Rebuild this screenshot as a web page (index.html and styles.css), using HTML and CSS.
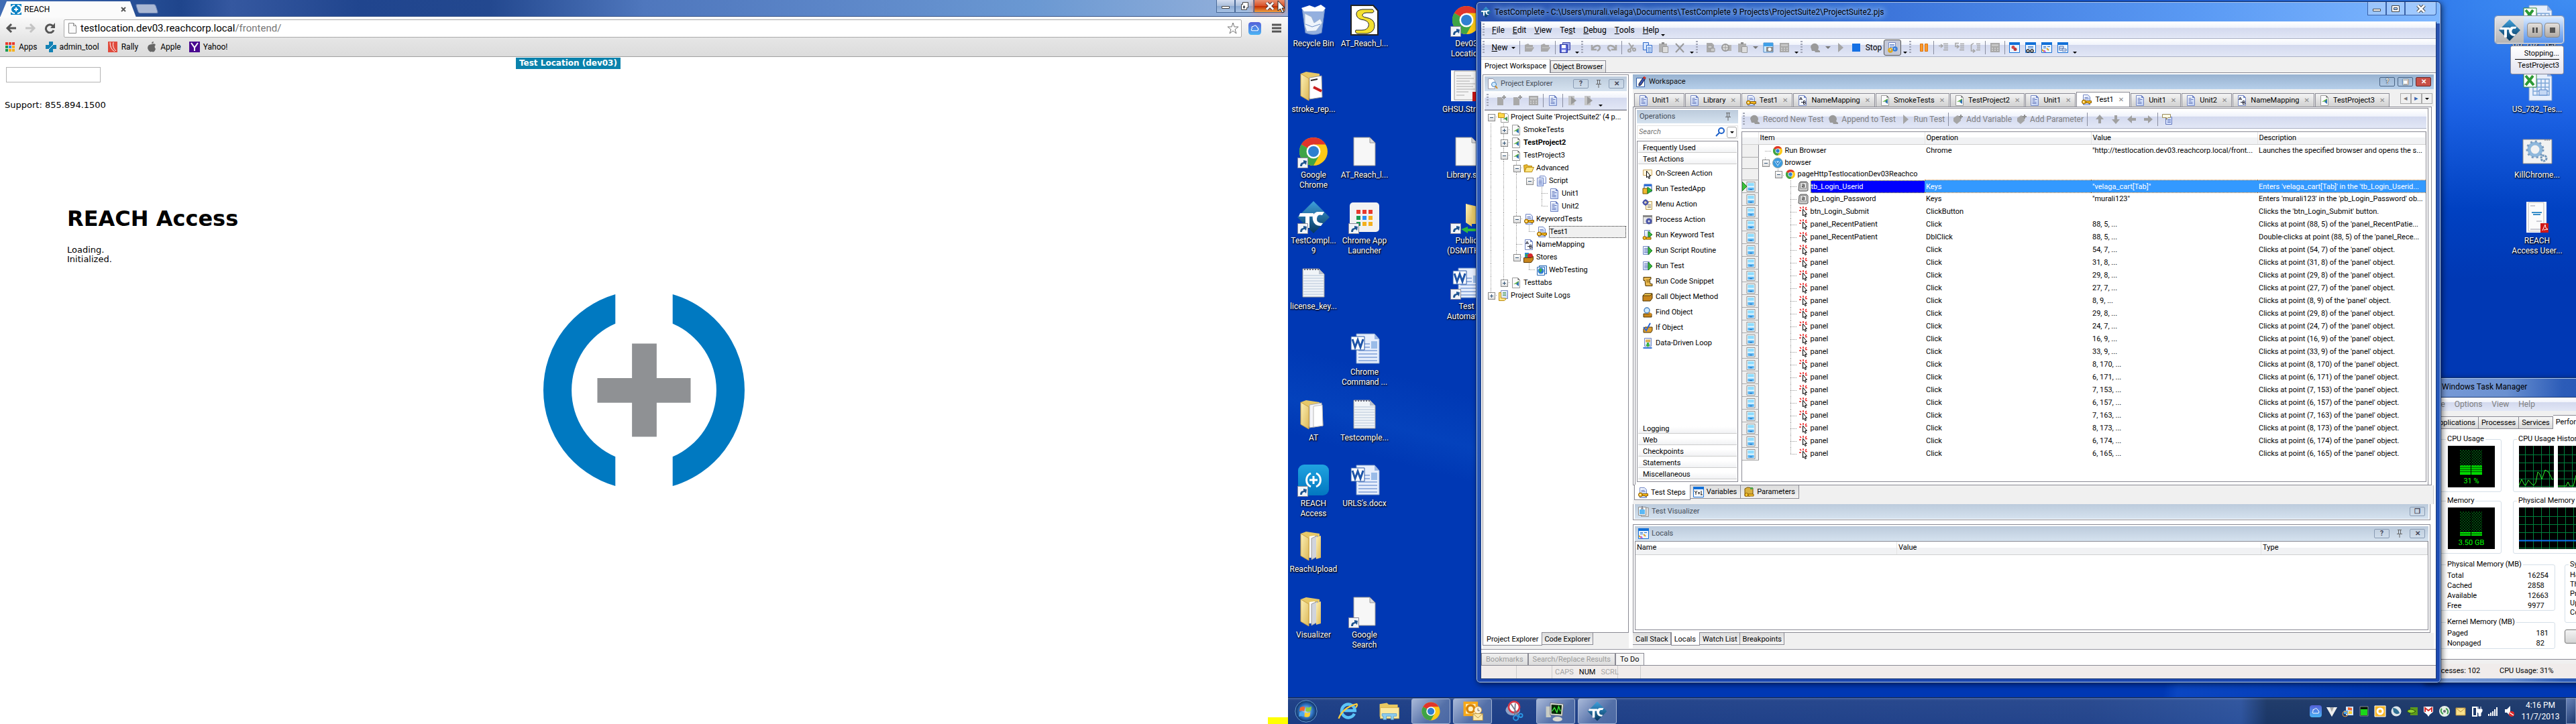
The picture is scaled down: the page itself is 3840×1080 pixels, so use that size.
FILE: index.html
```html
<!DOCTYPE html>
<html lang="en">
<head>
<meta charset="utf-8">
<title>REACH</title>
<link rel="stylesheet" href="styles.css">
</head>
<body>
<svg class="defs" aria-hidden="true">
  <defs>
    <linearGradient id="paper" x1="0" y1="0" x2="1" y2="1"><stop offset="0" stop-color="#fff"/><stop offset="1" stop-color="#b9cdf5"/></linearGradient>
    <linearGradient id="fold" x1="0" y1="0" x2="1" y2="1"><stop offset="0" stop-color="#fdf0b4"/><stop offset="1" stop-color="#dcb95a"/></linearGradient>
    <linearGradient id="tcg" x1="0" y1="0" x2="0" y2="1"><stop offset="0" stop-color="#3fa0dc"/><stop offset="1" stop-color="#06365c"/></linearGradient>
    <linearGradient id="rg" x1="0" y1="0" x2="0" y2="1"><stop offset="0" stop-color="#1fa3e0"/><stop offset="1" stop-color="#0277c0"/></linearGradient>
    <linearGradient id="cloudg" x1="0" y1="0" x2="0" y2="1"><stop offset="0" stop-color="#5560d8"/><stop offset="1" stop-color="#4ab4f4"/></linearGradient>
    <radialGradient id="orbg"><stop offset="0" stop-color="#bfe4ff"/><stop offset=".6" stop-color="#2f74c4"/><stop offset="1" stop-color="#0c2a5c"/></radialGradient>
    <pattern id="dots" width="4" height="4" patternUnits="userSpaceOnUse"><path d="M0 1h2M2 3h2" stroke="#009a1c"/></pattern>
  </defs>
  <symbol id="i-doc" viewBox="0 0 16 16"><path d="M2.500.5h8l3 3v12h-11z" fill="url(#paper)" stroke="#7487c4"/><path d="M10.500.5v3h3" fill="#5b73c0" stroke="#7487c4"/><path d="M4.500 4.500h4M4.500 6.500h7M4.500 8.500h4M4.500 10.500h6M4.500 12.500h6" stroke="#6478bd"/></symbol>
  <symbol id="i-key" viewBox="0 0 16 16"><path d="M3.500.5h7l3 3v12h-10z" fill="url(#paper)" stroke="#7487c4"/><path d="M5.500 4.500h5M5.500 6.500h6" stroke="#6478bd"/><circle cx="4.500" cy="11" r="3" fill="#f4b81c" stroke="#8a5a00"/><circle cx="4" cy="11" r="1" fill="#fff"/><path d="M7.500 9.500h8v3h-2v1h-2v-1h-4z" fill="#f4b81c" stroke="#8a5a00"/></symbol>
  <symbol id="i-map" viewBox="0 0 16 16"><path d="M2.500.5h8l3 3v12h-11z" fill="#f4f8ff" stroke="#7487c4"/><path d="M10.500.5v3h3" fill="#5b73c0" stroke="#7487c4"/><path d="M3.500 7l2-4 2 4M4 6h3M6 10.500h3M9.500 13.500v-5h1.500a1 1 0 0 1 0 2.500h-1.500 2a1 1 0 0 1 0 2.500z" fill="none" stroke="#223"/></symbol>
  <symbol id="i-proj" viewBox="0 0 16 16"><path d="M2.500.5h8l3 3v12h-11z" fill="#fafafa" stroke="#9a9a9a"/><path d="M10.500.5v3h3z" fill="#555"/><path d="M4 10l8-5v4z" fill="#5cb038"/><path d="M12 6v7l-4-3z" fill="#2b6fb0"/></symbol>
  <symbol id="i-suite" viewBox="0 0 16 16"><path d="M4.500 2.500h9l2 2v11h-11z" fill="#fafafa" stroke="#9a9a9a"/><path d="M7 11l7-4v7l-3-3z" fill="#4a9a50"/><path d="M.5 1.500h4l1 1h4v6h-9z" fill="#ffd84a" stroke="#b98a10"/></symbol>
  <symbol id="i-folder" viewBox="0 0 16 16"><path d="M.5 3.500l5-1 1 2h6v2h-8l-3 7z" fill="#e8b830" stroke="#b98a10"/><path d="M4.500 6.500h11l-3 7h-11z" fill="#ffe680" stroke="#b98a10"/></symbol>
  <symbol id="i-script" viewBox="0 0 16 16"><path d="M5.500.5h7l2 2v9h-9z" fill="#e8effd" stroke="#7487c4"/><path d="M1.500 3.500h9v12h-9z" fill="url(#paper)" stroke="#7487c4"/><path d="M3.500 6.500h5M3.500 8.500h5M3.500 10.500h5M3.500 12.500h5" stroke="#6478bd"/></symbol>
  <symbol id="i-store" viewBox="0 0 16 16"><path d="M2 1h6v7H2z" fill="#2e8fd8"/><circle cx="10" cy="6" r="4" fill="#d8282c"/><path d="M3 3h3v4H3z" fill="#3fa448"/><path d="M.5 8.500h11l3-2v5l-3 4h-11z" fill="#c8861c" stroke="#5c3800"/></symbol>
  <symbol id="i-web" viewBox="0 0 16 16"><path d="M4.500 1.500h11v12h-11z" fill="#d4e8ff" stroke="#2464b0"/><path d="M1.500 3.500h11v12h-11z" fill="#fff" stroke="#2464b0"/><circle cx="7" cy="9" r="4.500" fill="#2a7ad4"/><path d="M4 7l3-2 2 3-3 4z" fill="#3fb048"/></symbol>
  <symbol id="i-logs" viewBox="0 0 16 16"><path d="M4.500.5h10v12h-10z" fill="url(#paper)" stroke="#7487c4"/><path d="M7 3.500h5M7 5.500h5M7 7.500h5" stroke="#4f9a58"/><path d="M1.500 3.500h3v8l8 1-3 3h-8z" fill="#ffe68a" stroke="#b98a10"/></symbol>
  <symbol id="i-chrome" viewBox="0 0 48 48"><circle cx="24" cy="24" r="21" fill="#fdc916"/><path d="M24 24L5.800 13.500A21 21 0 0 1 42.200 13.500H24z" fill="#e0352b"/><path d="M24 24L5.800 13.500A21 21 0 0 0 24 45l9-16z" fill="#3fa446"/><circle cx="24" cy="24" r="10.500" fill="#fff"/><circle cx="24" cy="24" r="8" fill="#2f7fd0"/></symbol>
  <symbol id="i-globe" viewBox="0 0 16 16"><circle cx="8" cy="8" r="7.500" fill="#3a9be0" stroke="#9aa"/><path d="M3 5h10L8 13z" fill="#bfe4ff" opacity=".8"/><path d="M5 5l3 5 3-5" fill="none" stroke="#1a68b0"/></symbol>
  <symbol id="i-keys" viewBox="0 0 16 16"><path d="M4 1h9l2 2v11l-2 1H3l-2-1 1-11z" fill="#c9c9c9" stroke="#555"/><rect x="4" y="2.500" width="8.500" height="8.500" fill="#eee" stroke="#888"/><path d="M6 5h3.500v4.500M9.500 7H6.500v2h3" fill="none" stroke="#333"/></symbol>
  <symbol id="i-click" viewBox="0 0 16 16"><path d="M3 1l2 2M8 0v3M13 1l-2 2M2 6h3M11 4.500h3" stroke="#e81818" stroke-width="1.500"/><path d="M7.500 4v10l2-2 1.500 3.500 1.500-.7-1.500-3.300h2.500z" fill="#fff" stroke="#000"/></symbol>
  <symbol id="i-shot" viewBox="0 0 14 16"><path d="M.5.5h13v15H.5z" fill="#fff" stroke="#8a8a8a"/><path d="M2 2h10v6H2z" fill="#8fdcff"/><path d="M2 9h10v5H2z" fill="#5cb8f4"/><path d="M2 7h10v2H2z" fill="#e6f8ff"/><path d="M5 12.500h4" stroke="#1a58a8"/></symbol>
  <symbol id="i-screen" viewBox="0 0 16 16"><path d="M1.500 2.500h13v8h-13z" fill="#fff5dc" stroke="#c9a55c"/><path d="M6.500 4v10l2-2 1.500 3.500 1.500-.7-1.500-3.300h2.500z" fill="#fff" stroke="#000"/></symbol>
  <symbol id="i-app" viewBox="0 0 16 16"><path d="M3 1h11v11H3z" fill="#fff" stroke="#1d4fa8"/><path d="M3 1h11v3H3z" fill="#2e6fd8"/><path d="M1 7h7v8H1z" fill="#f0b830" stroke="#7a5400"/><path d="M8 5l7 5-7 5z" fill="#37b53c" stroke="#1a7a20"/></symbol>
  <symbol id="i-menu" viewBox="0 0 16 16"><path d="M5.500 3.500h9v12h-9z" fill="#fff6d8" stroke="#b99a50"/><path d="M8 8.500h5M8 10.500h5M8 12.500h5" stroke="#888"/><circle cx="5" cy="5" r="3" fill="none" stroke="#4a55a8" stroke-width="2.500"/><path d="M5 0v10M0 5h10" stroke="#4a55a8" stroke-dasharray="2 6"/></symbol>
  <symbol id="i-proc" viewBox="0 0 16 16"><path d="M1.500 1.500h13v12h-13z" fill="#e6e6e6" stroke="#999"/><path d="M1 1h14v3H1z" fill="#888"/><circle cx="10" cy="10" r="3" fill="none" stroke="#4a55a8" stroke-width="3"/></symbol>
  <symbol id="i-runkey" viewBox="0 0 16 16"><path d="M3.500.5h8v11h-8z" fill="url(#paper)" stroke="#7487c4"/><path d="M9 2l6 5-6 5z" fill="#37b53c" stroke="#1a7a20"/><circle cx="3.500" cy="12" r="2.500" fill="#f4b81c" stroke="#8a5a00"/><path d="M6 11h7v3H6z" fill="#f4b81c" stroke="#8a5a00"/></symbol>
  <symbol id="i-run" viewBox="0 0 16 16"><path d="M1.500 1.500h9v12h-9z" fill="url(#paper)" stroke="#7487c4"/><path d="M3 4.500h6M3 6.500h6M3 8.500h6M3 10.500h6" stroke="#6478bd"/><path d="M9 2l6 6-6 6z" fill="#37b53c" stroke="#1a7a20"/></symbol>
  <symbol id="i-snip" viewBox="0 0 16 16"><path d="M2 1.500h11v3h-2l1 7h3v3H5l-1-8H2z" fill="#e8b850" stroke="#4d3300"/><path d="M6 6h4M6.500 8.500h4" stroke="#7a5400"/></symbol>
  <symbol id="i-box" viewBox="0 0 16 16"><path d="M1 6l3-3h11v7l-3 4H1z" fill="#c8861c" stroke="#4d3300"/><path d="M1 6l3-3h11l-3 3z" fill="#ffd75c" stroke="#4d3300"/></symbol>
  <symbol id="i-find" viewBox="0 0 16 16"><path d="M2 10h12v5H2z" fill="#c8861c" stroke="#4d3300"/><circle cx="7" cy="5" r="4" fill="#cfeaff" stroke="#4d86c4" stroke-width="1.500"/><path d="M10 8l4 4" stroke="#d08a20" stroke-width="2"/></symbol>
  <symbol id="i-if" viewBox="0 0 16 16"><path d="M2 9l2-2h11v5l-2 3H2z" fill="#e0a030" stroke="#4d3300"/><path d="M2 7l4 5 6-11" fill="none" stroke="#2a66d8" stroke-width="2"/></symbol>
  <symbol id="i-loop" viewBox="0 0 16 16"><path d="M3.500.5h10v12h-10z" fill="url(#paper)" stroke="#7487c4"/><path d="M5 3.500h7M5 5.500h7" stroke="#e0a020" stroke-width="1.500"/><path d="M7 7h3v3h2l-3.500 4L5 10h2z" fill="#37b53c"/><path d="M1.500 15h13" stroke="#2e6fd8" stroke-width="2"/></symbol>
  <symbol id="g-new" viewBox="0 0 16 16"><path d="M2 3h6l3 3v9H2z" fill="#a9a9a9"/><path d="M12 0v6M9 3h6" stroke="#999" stroke-width="2"/></symbol>
  <symbol id="g-runp" viewBox="0 0 16 16"><path d="M2 1h9v14H2z" fill="#c4c4c4"/><path d="M6 2l8 6-8 6z" fill="#999"/></symbol>
  <symbol id="g-open" viewBox="0 0 16 16"><path d="M1 4l5-2 2 2h5v3l2 1-4 6H1z" fill="#a9a9a9"/><path d="M3 8h10" stroke="#ccc"/></symbol>
  <symbol id="g-save" viewBox="0 0 16 16"><path d="M4.500.5h11v11h-11z" fill="#9aa4e8" stroke="#3c48b0"/><path d="M.5 3.500h11v12H.5z" fill="#5a68dc" stroke="#28349c"/><path d="M3 4h6v5H3z" fill="#fff"/><path d="M3 11h6v4H3z" fill="#d8dcff"/></symbol>
  <symbol id="g-undo" viewBox="0 0 16 16"><path d="M2 4v7h7M3 10c2-5 10-7 11-2 0 3-2 4-4 5" fill="none" stroke="#a5a5a5" stroke-width="2.500"/></symbol>
  <symbol id="g-redo" viewBox="0 0 16 16"><path d="M14 4v7H7M13 10C11 5 3 3 2 8c0 3 2 4 4 5" fill="none" stroke="#a5a5a5" stroke-width="2.500"/></symbol>
  <symbol id="g-cut" viewBox="0 0 16 16"><path d="M4 1l6 9M11 4l-5 6" stroke="#a5a5a5" stroke-width="2"/><circle cx="5" cy="12.500" r="2" fill="none" stroke="#a5a5a5" stroke-width="2"/><circle cx="12" cy="11" r="2" fill="none" stroke="#a5a5a5" stroke-width="2"/></symbol>
  <symbol id="g-copy" viewBox="0 0 16 16"><path d="M1.500.5h8v11h-8z" fill="#d6e6ff" stroke="#2a66c8"/><path d="M6.500 4.500h8v11h-8z" fill="#eaf2ff" stroke="#2a66c8"/><path d="M8 7.500h5M8 9.500h5M8 11.500h5M8 13.500h5" stroke="#4d86d8"/></symbol>
  <symbol id="g-paste" viewBox="0 0 16 16"><path d="M1 2h12v13H1z" fill="#b0b0b0"/><path d="M5 0h4v3H5z" fill="#8f8f8f"/><path d="M6.500 6.500h8v9h-8z" fill="#ddd" stroke="#999"/></symbol>
  <symbol id="g-x" viewBox="0 0 16 16"><path d="M2 2l12 13M14 2L2 15" stroke="#999" stroke-width="2"/></symbol>
  <symbol id="g-obj" viewBox="0 0 16 16"><path d="M2 1h8l3 3v11H2z" fill="#a9a9a9"/><path d="M4 5h6v4H4zM8 9h6v5H8z" fill="#ccc" stroke="#999"/></symbol>
  <symbol id="g-aim" viewBox="0 0 16 16"><path d="M8 4h7v9H8z" fill="#b4b4b4"/><circle cx="6" cy="8" r="5" fill="#ddd" stroke="#999" stroke-width="2"/><path d="M6 4v8M2 8h8" stroke="#999"/></symbol>
  <symbol id="g-cam" viewBox="0 0 16 16"><path d="M1 1h14v14H1z" fill="#d2ecff" stroke="#4a86c4"/><path d="M1 1h14v5H1z" fill="#3fa0e8"/><path d="M5 7h10v7H5z" fill="#888"/><circle cx="10" cy="10.500" r="2.500" fill="#fff"/></symbol>
  <symbol id="g-rec" viewBox="0 0 16 16"><path d="M1 7a6 6 0 1 1 11 4l3 2v2H8l-1-2H3z" fill="#9a9a9a"/></symbol>
  <symbol id="g-play" viewBox="0 0 16 16"><path d="M4 1l8 7-8 7z" fill="#a5a5a5"/></symbol>
  <symbol id="g-stop" viewBox="0 0 16 16"><path d="M2 2h12v12H2z" fill="#1470e4"/></symbol>
  <symbol id="g-set" viewBox="0 0 16 16"><path d="M2.500.5h10v12h-10z" fill="#fff" stroke="#7487c4"/><path d="M4 3.500h7M4 5.500h7M4 7.500h7" stroke="#4d76c8"/><circle cx="5" cy="12" r="2.500" fill="none" stroke="#dca820" stroke-width="2.500"/><circle cx="12" cy="10" r="2.500" fill="none" stroke="#3a7fd8" stroke-width="2.500"/></symbol>
  <symbol id="g-pause" viewBox="0 0 16 16"><path d="M2.500 2.500h4v11h-4zM9.500 2.500h4v11h-4z" fill="#ff9a2a" stroke="#d87410"/></symbol>
  <symbol id="g-step" viewBox="0 0 16 16"><path d="M1 5.500h5M4 3l3 2.500L4 8M8 2.500h7M9 5.500h6M9 8.500h6M8 11.500h7" fill="none" stroke="#a5a5a5" stroke-width="1.500"/></symbol>
  <symbol id="g-over" viewBox="0 0 16 16"><path d="M7 1.500H2v5h4M4 4l3 2.500L4 9M9 2.500h6M9 5.500h6M9 8.500h6M8 11.500h7" fill="none" stroke="#a5a5a5" stroke-width="1.500"/></symbol>
  <symbol id="g-out" viewBox="0 0 16 16"><path d="M5 1.500L1.500 4v9H6M4 10.500L7 13l-3 2.500M9 2.500h6M10 5.500h5M10 8.500h5M9 11.500h6" fill="none" stroke="#a5a5a5" stroke-width="1.500"/></symbol>
  <symbol id="g-calc" viewBox="0 0 16 16"><path d="M1 1h14v14H1z" fill="#a9a9a9"/><path d="M3 3h10v3H3z" fill="#c6c6c6"/><path d="M3 9h10M3 12h10" stroke="#ccc" stroke-dasharray="2 2" stroke-width="2"/></symbol>
  <symbol id="g-w1" viewBox="0 0 16 16"><path d="M.5.5h15v15H.5z" fill="#eaf4ff" stroke="#1a6fd4"/><path d="M0 0h16v4H0z" fill="#1270d8"/><circle cx="6" cy="7.500" r="2.500" fill="#d04848"/><circle cx="9" cy="10.500" r="2.500" fill="#c03838"/></symbol>
  <symbol id="g-w2" viewBox="0 0 16 16"><path d="M.5.5h15v15H.5z" fill="#eaf4ff" stroke="#1a6fd4"/><path d="M0 0h16v4H0z" fill="#1270d8"/><path d="M4 6.500h8M4 8.500h8" stroke="#2f74c8"/><circle cx="4" cy="13" r="2" fill="#fff" stroke="#222" stroke-width="1.500"/><circle cx="10" cy="13" r="2" fill="#fff" stroke="#222" stroke-width="1.500"/></symbol>
  <symbol id="g-w3" viewBox="0 0 16 16"><path d="M.5.5h15v15H.5z" fill="#eaf4ff" stroke="#1a6fd4"/><path d="M0 0h16v4H0z" fill="#1270d8"/><path d="M3 6.500h4M9 6.500h4M3 8.500h4" stroke="#2f74c8"/><path d="M1 11l3 3M8 9l3 3" stroke="#e0a020" stroke-width="2"/><path d="M4 12l2 3" stroke="#c84cc8" stroke-width="2"/></symbol>
  <symbol id="g-w4" viewBox="0 0 16 16"><path d="M.5.5h15v15H.5z" fill="#eaf4ff" stroke="#1a6fd4"/><path d="M0 0h16v4H0z" fill="#1270d8"/><path d="M3 6h6v3H3zM7 10h6v3H7zM3 9v3h3" fill="none" stroke="#4868a8"/></symbol>
  <symbol id="g-cube" viewBox="0 0 16 16"><path d="M1 6l6-4 5 3v5l-6 5-5-4z" fill="#a5a5a5"/><path d="M12 1v6M9 4h6" stroke="#8f8f8f" stroke-width="2"/></symbol>
  <symbol id="g-arr" viewBox="0 0 16 16"><path d="M8 1l6 7h-4v6H6V8H2z" fill="#a0a0a0"/></symbol>
  <symbol id="g-note" viewBox="0 0 16 16"><path d="M5.500 4.500h9v11h-9z" fill="#d6e2ff" stroke="#6478bd"/><path d="M8 8.500h5M8 10.500h5M8 12.500h5" stroke="#6478bd"/><path d="M.5.5h12v5h-4l-2 3v-3h-6z" fill="#fffbe6" stroke="#998a5a"/></symbol>
  <symbol id="i-pin" viewBox="0 0 12 14"><path d="M3 1.500h6M4.500 2v5M7.500 2v5M2 7.500h8M6 8v5" fill="none" stroke="#666"/></symbol>
  <symbol id="i-edit" viewBox="0 0 16 16"><path d="M1.500 2.500h12v13h-12z" fill="#fff" stroke="#2a5aa8"/><path d="M5 11l7-10 3 2-7 10-3 1z" fill="#3a55b0" stroke="#223"/><path d="M12 1l3 2" stroke="#d83020" stroke-width="3"/></symbol>
  <symbol id="i-pe" viewBox="0 0 16 16"><path d="M1.500.5h7l3 3v12h-10z" fill="#fff" stroke="#99a"/><circle cx="10" cy="9" r="3.500" fill="#cfeaff" stroke="#3f7fc0"/><path d="M12 11l3 4" stroke="#d08a20" stroke-width="2"/></symbol>
  <symbol id="i-viz" viewBox="0 0 16 16"><path d="M4.500 2.500h11v13h-11z" fill="#ddd" stroke="#999"/><path d="M.5 1.500h11v12H.5z" fill="#fff" stroke="#888"/><path d="M2 5h8v7H2z" fill="#5cb8f4"/><path d="M6 0v4M4 4h4" stroke="#556"/></symbol>
  <symbol id="i-var" viewBox="0 0 16 16"><path d="M.5.5h15v15H.5z" fill="#fff" stroke="#1a6fd4"/><path d="M0 0h16v4H0z" fill="#1270d8"/><path d="M2 6l2 3v3M6 6L4 9M7 8.500h3M7 10.500h3M12 6v6M11 12h3" stroke="#111" fill="none"/></symbol>
  <symbol id="i-par" viewBox="0 0 16 16"><path d="M2 3l4-2 8 1v8l-4 4H2z" fill="#d8b040" stroke="#7a5400"/><circle cx="4.500" cy="12" r="2.500" fill="#ffcb30" stroke="#8a5a00"/><path d="M7 11h8v3H7z" fill="#ffcb30" stroke="#8a5a00"/><path d="M10 1h4v3h-4z" fill="#4fa448"/></symbol>

  <symbol id="d-bin" viewBox="0 0 48 48"><path d="M7 6h34l-5 37q-12 5-24 0z" fill="#c6d8ee" opacity=".75" stroke="#8fa6c8"/><path d="M6 6l12-4 8 3 9-4 7 5-4 5H10z" fill="#fff"/><path d="M11 14l10 5 4 9 9-6 3 6-9 12-14 1-3-9z" fill="#eef4fb" stroke="#9db2d0"/><path d="M12 30l10 4 12-4" stroke="#6b8fc8" fill="none"/></symbol>
  <symbol id="d-s" viewBox="0 0 48 48"><path d="M4 2h33l7 8v36H4z" fill="#fff" stroke="#222" stroke-width="2"/><path d="M36 8H21q-10 1-9 8t12 8q8 3 6 9t-10 6H11q-2 4 3 5h14q11-2 11-12t-13-12q-6-1-5-4t6-3h9q4-2 0-5z" fill="#f4e030" stroke="#222"/></symbol>
  <symbol id="d-folder" viewBox="0 0 48 48"><path d="M5 6l8-3 20 3v36H16z" fill="#e6c868"/><path d="M18 10l18-3 2 34-20 3z" fill="#f4f4f8" stroke="#aaa"/><path d="M24 12l13-2 1 31-14 2z" fill="#fff" stroke="#bbb"/><path d="M5 6l12 7v33L5 39z" fill="url(#fold)" stroke="#c8a048"/></symbol>
  <symbol id="d-folder2" viewBox="0 0 48 48"><path d="M5 6l8-3 20 3v36H16z" fill="#e6c868"/><path d="M18 10l8-1 1 33h-9z" fill="#fff"/><path d="M21 13l9-4v31l-9 5z" fill="#d0d4dc" stroke="#999"/><path d="M28 12l7-3v33l-7 2z" fill="url(#fold)"/><path d="M5 6l12 7v33L5 39z" fill="url(#fold)" stroke="#c8a048"/></symbol>
  <symbol id="d-rep" viewBox="0 0 48 48"><path d="M5 6l8-3 20 3v36H16z" fill="#e6c868"/><path d="M18 12l18-3 1 32-19 3z" fill="#fff" stroke="#999"/><path d="M20 16l10-2" stroke="#222" stroke-width="2"/><path d="M24 26l12 6" stroke="#c81e1e" stroke-width="4"/><path d="M5 6l12 7v33L5 39z" fill="url(#fold)" stroke="#c8a048"/></symbol>
  <symbol id="d-file" viewBox="0 0 48 48"><path d="M8 3h24l8 8v34H8z" fill="#f7f7f7" stroke="#999"/><path d="M32 3v8h8z" fill="#d8d8dc" stroke="#999"/></symbol>
  <symbol id="d-txt" viewBox="0 0 48 48"><path d="M8 3h24l8 8v34H8z" fill="#f0f4f8" stroke="#999"/><path d="M32 3v8h8z" fill="#b8c0cc"/><path d="M9 13h30M9 17h30M9 21h30M9 25h30M9 29h30M9 33h30M9 37h30M9 41h30" stroke="#b4c4d8"/><path d="M10 4h22" stroke="#667" stroke-width="2" stroke-dasharray="2 2"/></symbol>
  <symbol id="d-word" viewBox="0 0 48 48"><path d="M12 2h27l7 8v36H12z" fill="#e6eefc" stroke="#7f9cc8"/><path d="M39 2v8h7z" fill="#9ab4e0"/><path d="M15 17h17M15 22h17M15 27h28M15 32h28M15 37h28M15 42h28" stroke="#7fa0d8" stroke-width="1.500"/><path d="M34 13h9v11h-9z" fill="#9abce8"/><path d="M4 6h20v20H4z" fill="#fff" stroke="#2a5aa8"/><path d="M6 10l4 12 4-11 4 11 4-12" fill="none" stroke="#1f55a8" stroke-width="3"/></symbol>
  <symbol id="d-xls" viewBox="0 0 48 48"><path d="M12 2h27l7 8v36H12z" fill="#e6eefc" stroke="#7f9cc8"/><path d="M39 2v8h7z" fill="#9ab4e0"/><path d="M18 14h24v24H18zM18 20h24M18 26h24M18 32h24M24 14v24M30 14v24M36 14v24" fill="none" stroke="#7fa8d8" stroke-width="1.500"/><path d="M27 30h12v8H27z" fill="#c4d8f4" stroke="#5a86c8"/><path d="M4 6h19v20H4z" fill="#fff" stroke="#2c8a34"/><path d="M7 9l12 14M18 9L7 23" stroke="#2c9a34" stroke-width="4"/></symbol>
  <symbol id="d-tc" viewBox="0 0 48 48"><path d="M24 0l24 24-24 24L0 24z" fill="url(#tcg)"/><path d="M4 18h20v5h-6v17h-6V23H2z" fill="#fff"/><path d="M40 16H29q-8 3-6 12t12 9l3-4q-10 0-9-7t8-5z" fill="#fff"/></symbol>
  <symbol id="d-launch" viewBox="0 0 48 48"><rect x="2" y="2" width="44" height="44" rx="5" fill="#f2f2f2"/><path d="M12 13h6v6h-6zM21 13h6v6h-6zM30 13h6v6h-6z" fill="#e8392c"/><path d="M12 22h6v6h-6zM12 31h6v6h-6z" fill="#189a50"/><path d="M21 22h6v6h-6z" fill="#2a8ff0"/><path d="M30 22h6v6h-6zM21 31h6v6h-6zM30 31h6v6h-6z" fill="#f4b01c"/></symbol>
  <symbol id="d-reach" viewBox="0 0 48 48"><rect x="1" y="1" width="46" height="46" rx="9" fill="url(#rg)"/><path d="M20 14a11 11 0 0 0 0 20M28 14a11 11 0 0 1 0 20" fill="none" stroke="#fff" stroke-width="3"/><path d="M24 18v12M18 24h12" stroke="#fff" stroke-width="3"/></symbol>
  <symbol id="d-pdfw" viewBox="0 0 48 48"><path d="M1 1h44v46H1z" fill="#fff"/><path d="M6 2h36v43H6z" fill="#f4f4f4" stroke="#999"/><path d="M9 9h22M9 13h26M9 17h20M9 21h28M9 25h25M9 29h28M9 33h18M9 38h12" stroke="#aaa"/><path d="M33 33h14v14H33z" fill="#c81414"/></symbol>
  <symbol id="d-pdf" viewBox="0 0 48 48"><path d="M8 1h30v46H8z" fill="#fff"/><path d="M11 2h23v43H11z" fill="#fbfbfb" stroke="#bbb"/><path d="M16 17h15M18 20h11" stroke="#3a8fc8" stroke-width="2"/><path d="M14 7h7M23 30h8M14 42h16" stroke="#99a"/><path d="M29 33h12v14H29z" fill="#d01818"/><path d="M32 44l4-9 1 5 3 2-6 1" fill="none" stroke="#fff"/></symbol>
  <symbol id="d-gears" viewBox="0 0 48 48"><path d="M3 6h43v36H3z" fill="#f2f2f2" stroke="#888"/><path d="M35 7h9" stroke="#667" stroke-dasharray="2 1"/><circle cx="21" cy="21" r="9" fill="none" stroke="#8fb8dc" stroke-width="5"/><circle cx="21" cy="21" r="12" fill="none" stroke="#7a9cc0" stroke-width="3" stroke-dasharray="3 4"/><circle cx="34" cy="34" r="4" fill="none" stroke="#6f94b8" stroke-width="3" stroke-dasharray="3 1"/></symbol>
  <symbol id="d-net" viewBox="0 0 48 48"><path d="M23 4l17 4v26H30z" fill="#e6c868"/><path d="M23 4l9 4v30l-9-6z" fill="url(#fold)"/><path d="M16 42l10-4v3h20v4H26v3z" fill="#2fb840"/></symbol>
  <symbol id="d-cut" viewBox="0 0 16 16"><path d="M.5.5h15v15H.5z" fill="#f2f4f8" stroke="#889"/><path d="M4 13q0-6 5-6V4l5 1-1 6-2-2q-4 0-4 4z" fill="#1f5590"/></symbol>

  <symbol id="t-orb" viewBox="0 0 40 40"><circle cx="20" cy="20" r="18" fill="url(#orbg)" stroke="#6fa8dc"/><path d="M10 14q4-3 8-1l-1 7q-4-2-8 0z" fill="#f0642c"/><path d="M20 13q4 2 9-1l-1 7q-4 3-9 1z" fill="#8fd040"/><path d="M9 22q4-2 8 0l-1 7q-4-2-8 0z" fill="#4aa8f0"/><path d="M18 22q5 2 9-1l-1 7q-4 3-9 1z" fill="#fcd030"/></symbol>
  <symbol id="t-ie" viewBox="0 0 40 40"><path d="M31 24a11 11 0 1 1 1-5H14" fill="none" stroke="#5cc4f8" stroke-width="5"/><path d="M5 32Q12 14 35 8q2 2-2 6" fill="none" stroke="#f8cc3c" stroke-width="2.500"/></symbol>
  <symbol id="t-exp" viewBox="0 0 40 40"><path d="M4 8l12-2 3 3h15v20H4z" fill="#e8c860"/><path d="M5 14h31v18H5z" fill="#fbe9a0" stroke="#d8b048"/><path d="M8 24h24v4h-5v6h-4v-6h-8v6h-5v-6H8z" fill="#8fcdf0" stroke="#5aa0cc"/></symbol>
  <symbol id="t-out" viewBox="0 0 40 40"><path d="M5 4h24v24H5z" fill="#f8a818"/><path d="M9 8h16v16H9z" fill="#fff0c0"/><circle cx="17" cy="16" r="6" fill="none" stroke="#d88408" stroke-width="4"/><circle cx="29" cy="18" r="6" fill="#fff2d8" stroke="#d8a040"/><path d="M29 15v4h3" stroke="#555" fill="none"/><path d="M21 24h16v11H21z" fill="#fce8a8" stroke="#b8903c"/><path d="M21 24l8 7 8-7" fill="none" stroke="#b8903c"/></symbol>
  <symbol id="t-snip" viewBox="0 0 40 40"><ellipse cx="18" cy="18" rx="12" ry="9" fill="#8fa4c8"/><circle cx="20" cy="13" r="9" fill="#fff" stroke="#d83848" stroke-width="3"/><path d="M15 8l13 20M22 7l-1 20" stroke="#778" stroke-width="2"/><circle cx="23" cy="31" r="4" fill="none" stroke="#2a9ae8" stroke-width="2"/><circle cx="31" cy="27" r="3" fill="none" stroke="#2a9ae8" stroke-width="2"/></symbol>
  <symbol id="t-tm" viewBox="0 0 40 40"><path d="M4 12h8v18H4z" fill="#c8ccc4"/><path d="M11 6l22 2-2 20-20-2z" fill="#e0e4d8" stroke="#667"/><path d="M13 9l17 1-1 15-16-1z" fill="#062806"/><path d="M14 20l4-6 4 8 3-10 3 8" fill="none" stroke="#3cf03c" stroke-width="1.500"/><ellipse cx="23" cy="33" rx="8" ry="4" fill="#d8d8d0"/></symbol>
  <symbol id="y-cloud" viewBox="0 0 18 18"><rect width="18" height="18" rx="4" fill="url(#cloudg)"/><path d="M5 12h8q2-2 0-4l-1-1q-2-4-5-1-3 0-2 3-2 2 0 3z" fill="none" stroke="#fff"/></symbol>
  <symbol id="y-v" viewBox="0 0 18 18"><path d="M1 3h16L9 17z" fill="#aaa"/><path d="M1 3h5l3 7 3-7h5L9 17z" fill="#eee"/></symbol>
  <symbol id="y-win" viewBox="0 0 18 18"><path d="M6 2h11v13H6z" fill="#cfe4fa"/><path d="M9 3l6 1v4l-6-1z" fill="#f0642c"/><path d="M3 8h6v5H3z" fill="#4aa8f0"/><path d="M10 9h5v4h-5z" fill="#fcd030"/><circle cx="5" cy="13" r="4" fill="none" stroke="#e8a040"/></symbol>
  <symbol id="y-cpu" viewBox="0 0 18 18"><path d="M3 2h12v14H3z" fill="#041804" stroke="#889"/><path d="M4 6h10v9H4z" fill="#1ad81a"/></symbol>
  <symbol id="y-o" viewBox="0 0 18 18"><path d="M1 1h16v16H1z" fill="#f8b828" stroke="#fff"/><circle cx="9" cy="9" r="4" fill="none" stroke="#fff" stroke-width="3"/></symbol>
  <symbol id="y-ball" viewBox="0 0 18 18"><circle cx="9" cy="9" r="7.500" fill="#dfe6ea"/><path d="M4 4q7 0 10 8-6 3-9-2z" fill="#2f6f94"/></symbol>
  <symbol id="y-nv" viewBox="0 0 18 18"><path d="M6 3h11v12H6z" fill="#5c9a1c"/><path d="M1 9q5-6 13 0-7 6-13 0z" fill="#8fd030" stroke="#2a5008"/></symbol>
  <symbol id="y-m" viewBox="0 0 18 18"><path d="M2 2h14v8l-5 4-2 3-2-3-5-4z" fill="#fff"/><path d="M4 10V4l5 4 5-4v6" fill="none" stroke="#d02c2c" stroke-width="2"/></symbol>
  <symbol id="y-sync" viewBox="0 0 18 18"><circle cx="9" cy="9" r="8" fill="#e6efe6"/><path d="M5 5a5 5 0 0 0 2 8M13 13a5 5 0 0 0-2-8" fill="none" stroke="#3a9a4a" stroke-width="2"/><circle cx="9" cy="9" r="2" fill="#667"/></symbol>
  <symbol id="y-mail" viewBox="0 0 18 18"><path d="M2 4h14v11H2z" fill="#fae08a" stroke="#b8903c"/><path d="M2 4l7 6 7-6" fill="none" stroke="#b8903c"/></symbol>
  <symbol id="y-plug" viewBox="0 0 18 18"><path d="M3 3h6v13H3z" fill="none" stroke="#fff" stroke-width="2"/><path d="M9 6h8v3l-2 3v4h-3v-4l-3-3zM11 2v4M15 2v4" fill="#fff" stroke="#fff"/></symbol>
  <symbol id="y-sig" viewBox="0 0 18 18"><path d="M3 16v-3M6 16v-5M9 16V9M12 16V6M15 16V3" stroke="#fff" stroke-width="2"/></symbol>
  <symbol id="y-vol" viewBox="0 0 18 18"><path d="M3 6h3l5-5v15l-5-5H3z" fill="#fff"/><circle cx="13" cy="13" r="4" fill="#e02828"/><path d="M10 11l6 4" stroke="#fff" stroke-width="1.500"/></symbol>
</svg>

<section class="browser" aria-label="REACH in Chrome">
  <div class="tabstrip">
    <div class="btab"><svg class="s16" viewBox="0 0 16 16"><path d="M0 0h16v16H0z" fill="#0b82c4"/><path d="M6 2a6 6 0 0 0 0 12M10 2a6 6 0 0 1 0 12M8 5v6M5 8h6" fill="none" stroke="#fff" stroke-width="2"/></svg><span>REACH</span><button class="plain" aria-label="Close tab"><svg width="8" height="8" viewBox="0 0 8 8"><path d="M1 1l6 6M7 1L1 7" stroke="#555" stroke-width="2"/></svg></button></div>
    <button class="newtab" aria-label="New tab"></button>
    <div class="wbtns"><button class="wb wb-s" aria-label="Minimize"><svg width="14" height="12" viewBox="0 0 14 12"><path d="M1.500 6.500h11v3h-11z" fill="#fff" stroke="#444"/></svg></button><button class="wb wb-s" aria-label="Restore"><svg width="14" height="14" viewBox="0 0 14 14"><path d="M4.500 1.500h8v8h-2v3h-8v-8h2z" fill="#fff" stroke="#444"/><path d="M5.500 7h2v3h-2z" fill="#6a8cb8" stroke="#444"/></svg></button><button class="wb wb-close hot" aria-label="Close"><svg width="14" height="12" viewBox="0 0 14 12"><path d="M2 1l10 10M12 1L2 11" stroke="#533" stroke-width="5"/><path d="M2 1l10 10M12 1L2 11" stroke="#fff" stroke-width="3"/></svg></button></div>
    <svg class="cursor" width="12" height="20" viewBox="0 0 12 20"><path d="M1 1v15l3.500-3 3 6 2.500-1-3-6H11z" fill="#fff" stroke="#222"/></svg>
  </div>
  <div class="chromebar">
    <div class="navrow">
      <button class="plain" aria-label="Back"><svg width="17" height="16" viewBox="0 0 17 16"><path d="M9 2L3 8l6 6M3 8h13" fill="none" stroke="#555" stroke-width="3"/></svg></button>
      <button class="plain" aria-label="Forward"><svg width="17" height="16" viewBox="0 0 17 16"><path d="M8 2l6 6-6 6M14 8H1" fill="none" stroke="#c4c4c4" stroke-width="3"/></svg></button>
      <button class="plain" aria-label="Reload"><svg width="17" height="16" viewBox="0 0 17 16"><path d="M13 5a6 6 0 1 0 1 6" fill="none" stroke="#555" stroke-width="3"/><path d="M16 0v8H9z" fill="#555"/></svg></button>
      <div class="omni"><svg width="12" height="16" viewBox="0 0 12 16"><path d="M.5.5h7l4 4v11H.5z" fill="#fafafa" stroke="#888"/><path d="M7.500.5v4h4" fill="none" stroke="#888"/></svg><a href="#frontend">testlocation.dev03.reachcorp.local<i>/frontend/</i></a><svg class="star" width="18" height="18" viewBox="0 0 18 18"><path d="M9 1l2 6h6l-5 4 2 6-5-4-5 4 2-6-5-4h6z" fill="#fff" stroke="#777"/></svg></div>
      <svg class="ext" width="19" height="19"><use href="#y-cloud"/></svg>
      <button class="plain" aria-label="Menu"><svg width="14" height="14" viewBox="0 0 14 14"><path d="M0 2h14M0 7h14M0 12h14" stroke="#555" stroke-width="3"/></svg></button>
    </div>
    <nav class="marks">
      <a href="#apps"><svg class="s16" viewBox="0 0 16 16"><path d="M1 1h4v4H1zM6 1h4v4H6zM11 1h4v4h-4z" fill="#e8392c"/><path d="M1 6h4v4H1z" fill="#189a50"/><path d="M6 6h4v4H6z" fill="#2a8ff0"/><path d="M1 11h4v4H1z" fill="#189a50"/><path d="M11 6h4v4h-4zM6 11h4v4H6zM11 11h4v4h-4z" fill="#f4b01c"/></svg>Apps</a>
      <a href="#admin"><svg class="s16" viewBox="0 0 16 16"><path d="M5 0h6v5h5v6h-5v5H5v-5H0V5h5z" fill="#1482b4"/><path d="M3 13L13 3" stroke="#fff"/></svg>admin_tool</a>
      <a href="#rally"><svg class="s16" viewBox="0 0 16 16"><path d="M1 0h14v16H1z" fill="#e04a3c"/><path d="M4 1q0 10 7 14M9 1q-2 8 4 13" fill="none" stroke="#fff"/></svg>Rally</a>
      <a href="#apple"><svg class="s16" viewBox="0 0 16 16"><path d="M8 4q5-2 6 1-3 2 0 6-2 5-4 4.500-2-1-4 0Q3 14 2 10q0-6 6-6zM8 3q0-3 3-3 0 3-3 3z" fill="#666"/></svg>Apple</a>
      <a href="#yahoo"><svg class="s16" viewBox="0 0 16 16"><path d="M0 0h16v16H0z" fill="#4a0a90"/><path d="M3 2l5 7 5-7M8 9v5" fill="none" stroke="#fff" stroke-width="2"/></svg>Yahoo!</a>
    </nav>
  </div>
  <main class="page">
    <div class="pagetop"><input class="pin" type="text" aria-label="Location"><strong class="tag">Test Location (dev03)</strong></div>
    <p class="support">Support: 855.894.1500</p>
    <h1>REACH Access</h1>
    <p class="load">Loading.<br>Initialized.</p>
    <svg class="logo" width="300" height="300" viewBox="-151 -151 302 302"><path d="M-43-144A150 150 0 0 0-43 144V100A109 109 0 0 1-43-100zM43-144A150 150 0 0 1 43 144V100A109 109 0 0 0 43-100z" fill="#0079c1"/><path d="M-18-70h37v52h51v37H19v51h-37V19h-52v-37h52z" fill="#8f9194"/></svg>
  </main>
  <div class="yellow"></div>
</section>

<section class="desktop" aria-label="Desktop">
  <div class="icons">
    <a href="#d" class="c1 r1"><svg><use href="#d-bin"/></svg>Recycle Bin</a>
    <a href="#d" class="c1 r2"><svg><use href="#d-rep"/></svg>stroke_rep...</a>
    <a href="#d" class="c1 r3 sc"><svg><use href="#i-chrome"/></svg>Google Chrome<svg class="cut"><use href="#d-cut"/></svg></a>
    <a href="#d" class="c1 r4 sc"><svg><use href="#d-tc"/></svg>TestCompl... 9<svg class="cut"><use href="#d-cut"/></svg></a>
    <a href="#d" class="c1 r5"><svg><use href="#d-txt"/></svg>license_key...</a>
    <a href="#d" class="c1 r7"><svg><use href="#d-folder"/></svg>AT</a>
    <a href="#d" class="c1 r8 sc"><svg><use href="#d-reach"/></svg>REACH Access<svg class="cut"><use href="#d-cut"/></svg></a>
    <a href="#d" class="c1 r9"><svg><use href="#d-folder2"/></svg>ReachUpload</a>
    <a href="#d" class="c1 r10"><svg><use href="#d-folder2"/></svg>Visualizer</a>
    <a href="#d" class="c2 r1"><svg><use href="#d-s"/></svg>AT_Reach_l...</a>
    <a href="#d" class="c2 r3"><svg><use href="#d-file"/></svg>AT_Reach_l...</a>
    <a href="#d" class="c2 r4 sc"><svg><use href="#d-launch"/></svg>Chrome App Launcher<svg class="cut"><use href="#d-cut"/></svg></a>
    <a href="#d" class="c2 r6"><svg><use href="#d-word"/></svg>Chrome Command ...</a>
    <a href="#d" class="c2 r7"><svg><use href="#d-txt"/></svg>Testcomple...</a>
    <a href="#d" class="c2 r8"><svg><use href="#d-word"/></svg>URLS's.docx</a>
    <a href="#d" class="c2 r10 sc"><svg><use href="#d-file"/></svg>Google Search<svg class="cut"><use href="#d-cut"/></svg></a>
    <a href="#d" class="c4 r1 sc"><svg><use href="#i-chrome"/></svg>Dev03 Location<svg class="cut"><use href="#d-cut"/></svg></a>
    <a href="#d" class="c4 r2"><svg><use href="#d-pdfw"/></svg>GHSU.Strok...</a>
    <a href="#d" class="c4 r3"><svg><use href="#d-file"/></svg>Library.sv...</a>
    <a href="#d" class="c4 r4 sc"><svg><use href="#d-net"/></svg>Public (DSMITH...<svg class="cut"><use href="#d-cut"/></svg></a>
    <a href="#d" class="c4 r5 sc"><svg><use href="#d-word"/></svg>Test Automati...<svg class="cut"><use href="#d-cut"/></svg></a>
    <a href="#d" class="c25 r1"><svg><use href="#d-xls"/></svg>US_732_Tes...</a>
    <a href="#d" class="c25 r2"><svg><use href="#d-xls"/></svg>US_732_Tes...</a>
    <a href="#d" class="c25 r3"><svg><use href="#d-gears"/></svg>KillChrome...</a>
    <a href="#d" class="c25 r4"><svg><use href="#d-pdf"/></svg>REACH Access User...</a>
  </div>

  <article class="win tm" aria-label="Windows Task Manager">
    <header class="tm-title">Windows Task Manager</header>
    <div class="tm-body">
      <div class="tm-menu"><button>File</button><button>Options</button><button>View</button><button>Help</button></div>
      <div class="tm-tabs"><button>Applications</button><button>Processes</button><button>Services</button><button class="on">Performance</button></div>
      <div class="tm-page">
        <div class="tm-grid">
          <fieldset><legend>CPU Usage</legend><svg class="g1" width="70" height="62" viewBox="0 0 70 62"><path d="M0 0h70v62H0z"/><path d="M18 6h16v24H18zM35 6h16v24H35z" fill="url(#dots)"/><path d="M18 30.500h16m1 0h16M18 33.500h16m1 0h16M18 36.500h16m1 0h16M18 39.500h16m1 0h16M18 42h16m1 0h16" stroke="#0f0" stroke-width="2"/><text x="35" y="56">31 %</text></svg></fieldset>
          <fieldset class="wide"><legend>CPU Usage History</legend><div class="hist"><svg width="52" height="62" viewBox="0 0 52 62"><path d="M0 0h52v62H0z"/><path d="M9.500 0v62M21.500 0v62M33.500 0v62M45.500 0v62M0 13.500h52M0 25.500h52M0 37.500h52M0 49.500h52M0 60.500h52" stroke="#00803c"/><path d="M0 59l4-9 4 8 2 1 4-8 5 6 3 2 3-4 3-16 3 3 3 8 5-14 5 3 3 6 3 6" fill="none" stroke="#2cf02c"/></svg><svg width="52" height="62" viewBox="0 0 52 62"><path d="M0 0h52v62H0z"/><path d="M9.500 0v62M21.500 0v62M33.500 0v62M45.500 0v62M0 13.500h52M0 25.500h52M0 37.500h52M0 49.500h52M0 60.500h52" stroke="#00803c"/><path d="M0 60h12l3-6 3 6h5l4-16 4 14h21" fill="none" stroke="#2cf02c"/></svg></div></fieldset>
          <fieldset><legend>Memory</legend><svg class="g1" width="70" height="62" viewBox="0 0 70 62"><path d="M0 0h70v62H0z"/><path d="M18 6h16v31H18zM35 6h16v31H35z" fill="url(#dots)"/><path d="M18 38h16m1 0h16M18 41h16m1 0h16" stroke="#0f0" stroke-width="2"/><text x="35" y="56">3.50 GB</text></svg></fieldset>
          <fieldset class="wide"><legend>Physical Memory Usage</legend><div class="hist"><svg width="120" height="62" viewBox="0 0 120 62"><path d="M0 0h120v62H0z"/><path d="M9.500 0v62M21.500 0v62M33.500 0v62M45.500 0v62M57.500 0v62M69.500 0v62M81.500 0v62M93.500 0v62M105.500 0v62M0 13.500h120M0 25.500h120M0 37.500h120M0 60.500h120" stroke="#00803c"/><path d="M0 49.500h120" stroke="#0a78f8" stroke-width="2"/></svg></div></fieldset>
        </div>
        <div class="tm-low">
          <div class="tm-c">
            <fieldset><legend>Physical Memory (MB)</legend><dl><dt>Total</dt><dd>16254</dd><dt>Cached</dt><dd>2858</dd><dt>Available</dt><dd>12663</dd><dt>Free</dt><dd>9977</dd></dl></fieldset>
            <fieldset class="kern"><legend>Kernel Memory (MB)</legend><dl><dt>Paged</dt><dd>181</dd><dt>Nonpaged</dt><dd>82</dd></dl></fieldset>
          </div>
          <div class="tm-c">
            <fieldset class="sys"><legend>System</legend><dl><dt>Handles</dt><dt>Threads</dt><dt>Processes</dt><dt>Up Time</dt><dt>Commit</dt></dl></fieldset>
            <button class="resmon" aria-label="Resource Monitor"></button>
          </div>
        </div>
      </div>
      <footer class="tm-status"><span>Processes: 102</span><span>CPU Usage: 31%</span></footer>
    </div>
  </article>

  <article class="win tc" aria-label="TestComplete">
    <header class="tc-title"><svg class="s16" viewBox="0 0 48 48"><use href="#d-tc"/></svg><span>TestComplete - C:\Users\murali.velaga\Documents\TestComplete 9 Projects\ProjectSuite2\ProjectSuite2.pjs</span>
      <div class="wbtns"><button class="wb" aria-label="Minimize"><svg width="14" height="12" viewBox="0 0 14 12"><path d="M1.500 6.500h11v3h-11z" fill="#fff" stroke="#444"/></svg></button><button class="wb" aria-label="Maximize"><svg width="14" height="12" viewBox="0 0 14 12"><path d="M1.500 1.500h11v9h-11zM4.500 4.500h5v3h-5z" fill="#fff" fill-rule="evenodd" stroke="#444"/></svg></button><button class="wb wb-close" aria-label="Close"><svg width="14" height="12" viewBox="0 0 14 12"><path d="M2 1l10 10M12 1L2 11" stroke="#444" stroke-width="5"/><path d="M2 1l10 10M12 1L2 11" stroke="#fff" stroke-width="3"/></svg></button></div>
    </header>
    <div class="tc-body">
      <nav class="menu"><i class="grip"></i><button><u>F</u>ile</button><button><u>E</u>dit</button><button><u>V</u>iew</button><button>Te<u>s</u>t</button><button><u>D</u>ebug</button><button><u>T</u>ools</button><button><u>H</u>elp</button><i class="drop"></i></nav>
      <div class="bar tbar">
        <i class="grip"></i><button class="new"><u>N</u>ew<i class="arrow"></i></button><i class="sep"></i><button aria-label="Open"><svg><use href="#g-open"/></svg></button><button aria-label="Close project"><svg><use href="#g-open"/></svg></button><i class="sep"></i><button aria-label="Save all"><svg><use href="#g-save"/></svg></button><i class="drop"></i>
        <i class="grip"></i><button aria-label="Undo"><svg><use href="#g-undo"/></svg></button><button aria-label="Redo"><svg><use href="#g-redo"/></svg></button><i class="sep"></i><button aria-label="Cut"><svg><use href="#g-cut"/></svg></button><button aria-label="Copy"><svg><use href="#g-copy"/></svg></button><button aria-label="Paste"><svg><use href="#g-paste"/></svg></button><button aria-label="Delete"><svg><use href="#g-x"/></svg></button><i class="drop"></i>
        <i class="grip"></i><button aria-label="Checkpoint"><svg><use href="#g-obj"/></svg></button><button aria-label="Object"><svg><use href="#g-aim"/></svg></button><button aria-label="Add check"><svg><use href="#g-paste"/></svg></button><i class="arrow big"></i><button aria-label="Capture"><svg><use href="#g-cam"/></svg></button><button aria-label="Stores"><svg><use href="#g-calc"/></svg></button><i class="drop"></i>
        <i class="grip"></i><button aria-label="Record"><svg><use href="#g-rec"/></svg></button><i class="arrow big"></i><button aria-label="Run"><svg><use href="#g-play"/></svg></button><button class="stop"><svg><use href="#g-stop"/></svg>Stop</button><button class="pressed" aria-label="Options"><svg><use href="#g-set"/></svg></button><i class="drop"></i>
        <i class="grip"></i><button aria-label="Pause"><svg><use href="#g-pause"/></svg></button><i class="sep"></i><button aria-label="Step into"><svg><use href="#g-step"/></svg></button><button aria-label="Step over"><svg><use href="#g-over"/></svg></button><button aria-label="Step out"><svg><use href="#g-out"/></svg></button><i class="sep"></i><button aria-label="Evaluate"><svg><use href="#g-calc"/></svg></button><i class="sep"></i><button aria-label="Breakpoints"><svg><use href="#g-w1"/></svg></button><button aria-label="Watch"><svg><use href="#g-w2"/></svg></button><button aria-label="Locals"><svg><use href="#g-w3"/></svg></button><button aria-label="Call stack"><svg><use href="#g-w4"/></svg></button><i class="drop"></i>
      </div>
      <div class="toptabs"><button class="on">Project Workspace</button><button>Object Browser</button></div>
      <div class="split">
        <aside class="left">
          <div class="panel">
            <div class="head"><svg class="s16"><use href="#i-pe"/></svg><span>Project Explorer</span><button class="hb" aria-label="Help">?</button><svg class="pinico"><use href="#i-pin"/></svg><button class="hb" aria-label="Close">✕</button></div>
            <div class="bar ptb"><i class="grip"></i><button aria-label="Add"><svg><use href="#g-new"/></svg></button><button aria-label="New item"><svg><use href="#g-new"/></svg></button><button aria-label="Remove"><svg><use href="#g-calc"/></svg></button><i class="sep"></i><button aria-label="List"><svg><use href="#i-doc"/></svg></button><i class="sep"></i><button aria-label="Run"><svg><use href="#g-runp"/></svg></button><button aria-label="Run all"><svg><use href="#g-runp"/></svg></button><i class="drop"></i></div>
            <ul class="tree">
              <li><b class="m f"></b><svg><use href="#i-suite"/></svg>Project Suite 'ProjectSuite2' (4 p...</li>
              <li><i class="v"></i><b class="p v"></b><svg><use href="#i-proj"/></svg>SmokeTests</li>
              <li class="bold"><i class="v"></i><b class="p v"></b><svg><use href="#i-proj"/></svg>TestProject2</li>
              <li><i class="v"></i><b class="m v"></b><svg><use href="#i-proj"/></svg>TestProject3</li>
              <li><i class="v"></i><i class="v"></i><b class="m v"></b><svg><use href="#i-folder"/></svg>Advanced</li>
              <li><i class="v"></i><i class="v"></i><i class="v"></i><b class="m"></b><svg><use href="#i-script"/></svg>Script</li>
              <li><i class="v"></i><i class="v"></i><i class="v"></i><i></i><i class="v t"></i><svg><use href="#i-doc"/></svg>Unit1</li>
              <li><i class="v"></i><i class="v"></i><i class="v"></i><i></i><i class="l t"></i><svg><use href="#i-doc"/></svg>Unit2</li>
              <li><i class="v"></i><i class="v"></i><b class="m v"></b><svg><use href="#i-key"/></svg>KeywordTests</li>
              <li><i class="v"></i><i class="v"></i><i class="v"></i><i class="l t"></i><svg><use href="#i-key"/></svg><em>Test1</em></li>
              <li><i class="v"></i><i class="v"></i><i class="v t"></i><svg><use href="#i-map"/></svg>NameMapping</li>
              <li><i class="v"></i><i class="v"></i><b class="m l"></b><svg><use href="#i-store"/></svg>Stores</li>
              <li><i class="v"></i><i class="v"></i><i></i><i class="l t"></i><svg><use href="#i-web"/></svg>WebTesting</li>
              <li><i class="v"></i><b class="p l"></b><svg><use href="#i-proj"/></svg>Testtabs</li>
              <li><b class="p l"></b><svg><use href="#i-logs"/></svg>Project Suite Logs</li>
            </ul>
          </div>
          <div class="btabs"><button class="on">Project Explorer</button><button>Code Explorer</button></div>
        </aside>

        <div class="right">
          <div class="head active ws"><svg class="s16"><use href="#i-edit"/></svg><span>Workspace</span><button class="hb" aria-label="Help">?</button><button class="hb" aria-label="Maximize">▣</button><button class="hb red" aria-label="Close">✕</button></div>
          <div class="dtabs">
            <button><svg class="s16"><use href="#i-doc"/></svg><span>Unit1</span><i>✕</i></button>
            <button><svg class="s16"><use href="#i-doc"/></svg><span>Library</span><i>✕</i></button>
            <button><svg class="s16"><use href="#i-key"/></svg><span>Test1</span><i>✕</i></button>
            <button><svg class="s16"><use href="#i-map"/></svg><span>NameMapping</span><i>✕</i></button>
            <button><svg class="s16"><use href="#i-proj"/></svg><span>SmokeTests</span><i>✕</i></button>
            <button><svg class="s16"><use href="#i-proj"/></svg><span>TestProject2</span><i>✕</i></button>
            <button><svg class="s16"><use href="#i-doc"/></svg><span>Unit1</span><i>✕</i></button>
            <button class="on"><svg class="s16"><use href="#i-key"/></svg><span>Test1</span><i>✕</i></button>
            <button><svg class="s16"><use href="#i-doc"/></svg><span>Unit1</span><i>✕</i></button>
            <button><svg class="s16"><use href="#i-doc"/></svg><span>Unit2</span><i>✕</i></button>
            <button><svg class="s16"><use href="#i-map"/></svg><span>NameMapping</span><i>✕</i></button>
            <button><svg class="s16"><use href="#i-proj"/></svg><span>TestProject3</span><i>✕</i></button>
            <div class="scrollers"><button aria-label="Previous">◂</button><button class="blue" aria-label="Next">▸</button><button aria-label="List tabs"><i class="arrow"></i></button></div>
          </div>
          <div class="doc"><div class="docin">
            <aside class="ops">
              <div class="head"><span>Operations</span><svg class="pinico"><use href="#i-pin"/></svg></div>
              <div class="search"><input type="text" placeholder="Search" aria-label="Search operations"><svg width="14" height="14" viewBox="0 0 14 14"><circle cx="9" cy="5" r="4" fill="#fff" stroke="#1a5fc8" stroke-width="2"/><path d="M6 8l-5 5" stroke="#1a5fc8" stroke-width="2"/></svg><button aria-label="Search options"><i class="arrow"></i></button></div>
              <div class="acc">
                <button class="sect">Frequently Used</button><button class="sect">Test Actions</button>
                <ul>
                  <li><svg><use href="#i-screen"/></svg>On-Screen Action</li><li><svg><use href="#i-app"/></svg>Run TestedApp</li><li><svg><use href="#i-menu"/></svg>Menu Action</li><li><svg><use href="#i-proc"/></svg>Process Action</li><li><svg><use href="#i-runkey"/></svg>Run Keyword Test</li><li><svg><use href="#i-run"/></svg>Run Script Routine</li><li><svg><use href="#i-run"/></svg>Run Test</li><li><svg><use href="#i-snip"/></svg>Run Code Snippet</li><li><svg><use href="#i-box"/></svg>Call Object Method</li><li><svg><use href="#i-find"/></svg>Find Object</li><li><svg><use href="#i-if"/></svg>If Object</li><li><svg><use href="#i-loop"/></svg>Data-Driven Loop</li>
                </ul>
                <button class="sect">Logging</button><button class="sect">Web</button><button class="sect">Checkpoints</button><button class="sect">Statements</button><button class="sect">Miscellaneous</button>
              </div>
            </aside>
            <div class="steps">
              <div class="bar sbar"><i class="grip"></i><button><svg><use href="#g-rec"/></svg>Record New Test</button><button><svg><use href="#g-rec"/></svg>Append to Test</button><button><svg><use href="#g-play"/></svg>Run Test</button><i class="sep"></i><button><svg><use href="#g-cube"/></svg>Add Variable</button><button><svg><use href="#g-cube"/></svg>Add Parameter</button><i class="sep"></i><button class="ic" aria-label="Up"><svg><use href="#g-arr"/></svg></button><button class="ic down" aria-label="Down"><svg><use href="#g-arr"/></svg></button><button class="ic lft" aria-label="Left"><svg><use href="#g-arr"/></svg></button><button class="ic rgt" aria-label="Right"><svg><use href="#g-arr"/></svg></button><i class="sep"></i><button class="ic" aria-label="Description"><svg><use href="#g-note"/></svg></button></div>
              <div class="tbox"><table class="tt">
                <colgroup><col class="cg"><col class="ci"><col class="ci"><col class="ci"><col></colgroup>
                <thead><tr><th></th><th>Item</th><th>Operation</th><th>Value</th><th>Description</th></tr></thead>
                <tbody>
                <tr><td></td><td><div><i class="f t"></i><svg><use href="#i-chrome"/></svg>Run Browser</div></td><td>Chrome</td><td>"http://testlocation.dev03.reachcorp.local/front...</td><td>Launches the specified browser and opens the s...</td></tr>
                <tr class="sh"><td></td><td><div><b class="m l"></b><svg><use href="#i-globe"/></svg>browser</div></td><td></td><td></td><td></td></tr>
                <tr class="sh"><td></td><td><div><i></i><b class="m l"></b><svg><use href="#i-chrome"/></svg>pageHttpTestlocationDev03Reachco</div></td><td></td><td></td><td></td></tr>
                <tr class="sel"><td><svg class="cur" width="8" height="16" viewBox="0 0 8 16"><path d="M0 1l7 7-7 7z" fill="#3cc43c" stroke="#1a7a20"/></svg><svg class="shot"><use href="#i-shot"/></svg></td><td><div><i></i><i></i><i class="v t"></i><svg><use href="#i-keys"/></svg><em>tb_Login_Userid</em></div></td><td>Keys</td><td>"velaga_cart[Tab]"</td><td>Enters 'velaga_cart[Tab]' in the 'tb_Login_Userid...</td></tr>
                <tr><td><svg class="shot"><use href="#i-shot"/></svg></td><td><div><i></i><i></i><i class="v t"></i><svg><use href="#i-keys"/></svg>pb_Login_Password</div></td><td>Keys</td><td>"murali123"</td><td>Enters 'murali123' in the 'pb_Login_Password' ob...</td></tr>
                <tr><td><svg class="shot"><use href="#i-shot"/></svg></td><td><div><i></i><i></i><i class="v t"></i><svg><use href="#i-click"/></svg>btn_Login_Submit</div></td><td>ClickButton</td><td></td><td>Clicks the 'btn_Login_Submit' button.</td></tr>
                <tr><td><svg class="shot"><use href="#i-shot"/></svg></td><td><div><i></i><i></i><i class="v t"></i><svg><use href="#i-click"/></svg>panel_RecentPatient</div></td><td>Click</td><td>88, 5, ...</td><td>Clicks at point (88, 5) of the 'panel_RecentPatie...</td></tr>
                <tr><td><svg class="shot"><use href="#i-shot"/></svg></td><td><div><i></i><i></i><i class="v t"></i><svg><use href="#i-click"/></svg>panel_RecentPatient</div></td><td>DblClick</td><td>88, 5, ...</td><td>Double-clicks at point (88, 5) of the 'panel_Rece...</td></tr>
                <tr><td><svg class="shot"><use href="#i-shot"/></svg></td><td><div><i></i><i></i><i class="v t"></i><svg><use href="#i-click"/></svg>panel</div></td><td>Click</td><td>54, 7, ...</td><td>Clicks at point (54, 7) of the 'panel' object.</td></tr>
                <tr><td><svg class="shot"><use href="#i-shot"/></svg></td><td><div><i></i><i></i><i class="v t"></i><svg><use href="#i-click"/></svg>panel</div></td><td>Click</td><td>31, 8, ...</td><td>Clicks at point (31, 8) of the 'panel' object.</td></tr>
                <tr><td><svg class="shot"><use href="#i-shot"/></svg></td><td><div><i></i><i></i><i class="v t"></i><svg><use href="#i-click"/></svg>panel</div></td><td>Click</td><td>29, 8, ...</td><td>Clicks at point (29, 8) of the 'panel' object.</td></tr>
                <tr><td><svg class="shot"><use href="#i-shot"/></svg></td><td><div><i></i><i></i><i class="v t"></i><svg><use href="#i-click"/></svg>panel</div></td><td>Click</td><td>27, 7, ...</td><td>Clicks at point (27, 7) of the 'panel' object.</td></tr>
                <tr><td><svg class="shot"><use href="#i-shot"/></svg></td><td><div><i></i><i></i><i class="v t"></i><svg><use href="#i-click"/></svg>panel</div></td><td>Click</td><td>8, 9, ...</td><td>Clicks at point (8, 9) of the 'panel' object.</td></tr>
                <tr><td><svg class="shot"><use href="#i-shot"/></svg></td><td><div><i></i><i></i><i class="v t"></i><svg><use href="#i-click"/></svg>panel</div></td><td>Click</td><td>29, 8, ...</td><td>Clicks at point (29, 8) of the 'panel' object.</td></tr>
                <tr><td><svg class="shot"><use href="#i-shot"/></svg></td><td><div><i></i><i></i><i class="v t"></i><svg><use href="#i-click"/></svg>panel</div></td><td>Click</td><td>24, 7, ...</td><td>Clicks at point (24, 7) of the 'panel' object.</td></tr>
                <tr><td><svg class="shot"><use href="#i-shot"/></svg></td><td><div><i></i><i></i><i class="v t"></i><svg><use href="#i-click"/></svg>panel</div></td><td>Click</td><td>16, 9, ...</td><td>Clicks at point (16, 9) of the 'panel' object.</td></tr>
                <tr><td><svg class="shot"><use href="#i-shot"/></svg></td><td><div><i></i><i></i><i class="v t"></i><svg><use href="#i-click"/></svg>panel</div></td><td>Click</td><td>33, 9, ...</td><td>Clicks at point (33, 9) of the 'panel' object.</td></tr>
                <tr><td><svg class="shot"><use href="#i-shot"/></svg></td><td><div><i></i><i></i><i class="v t"></i><svg><use href="#i-click"/></svg>panel</div></td><td>Click</td><td>8, 170, ...</td><td>Clicks at point (8, 170) of the 'panel' object.</td></tr>
                <tr><td><svg class="shot"><use href="#i-shot"/></svg></td><td><div><i></i><i></i><i class="v t"></i><svg><use href="#i-click"/></svg>panel</div></td><td>Click</td><td>6, 171, ...</td><td>Clicks at point (6, 171) of the 'panel' object.</td></tr>
                <tr><td><svg class="shot"><use href="#i-shot"/></svg></td><td><div><i></i><i></i><i class="v t"></i><svg><use href="#i-click"/></svg>panel</div></td><td>Click</td><td>7, 153, ...</td><td>Clicks at point (7, 153) of the 'panel' object.</td></tr>
                <tr><td><svg class="shot"><use href="#i-shot"/></svg></td><td><div><i></i><i></i><i class="v t"></i><svg><use href="#i-click"/></svg>panel</div></td><td>Click</td><td>6, 157, ...</td><td>Clicks at point (6, 157) of the 'panel' object.</td></tr>
                <tr><td><svg class="shot"><use href="#i-shot"/></svg></td><td><div><i></i><i></i><i class="v t"></i><svg><use href="#i-click"/></svg>panel</div></td><td>Click</td><td>7, 163, ...</td><td>Clicks at point (7, 163) of the 'panel' object.</td></tr>
                <tr><td><svg class="shot"><use href="#i-shot"/></svg></td><td><div><i></i><i></i><i class="v t"></i><svg><use href="#i-click"/></svg>panel</div></td><td>Click</td><td>8, 173, ...</td><td>Clicks at point (8, 173) of the 'panel' object.</td></tr>
                <tr><td><svg class="shot"><use href="#i-shot"/></svg></td><td><div><i></i><i></i><i class="v t"></i><svg><use href="#i-click"/></svg>panel</div></td><td>Click</td><td>6, 174, ...</td><td>Clicks at point (6, 174) of the 'panel' object.</td></tr>
                <tr><td><svg class="shot"><use href="#i-shot"/></svg></td><td><div><i></i><i></i><i class="l t"></i><svg><use href="#i-click"/></svg>panel</div></td><td>Click</td><td>6, 165, ...</td><td>Clicks at point (6, 165) of the 'panel' object.</td></tr>
                </tbody>
              </table></div>
            </div>
          </div></div>
          <div class="btabs st"><button class="on"><svg class="s16"><use href="#i-key"/></svg>Test Steps</button><button><svg class="s16"><use href="#i-var"/></svg>Variables</button><button><svg class="s16"><use href="#i-par"/></svg>Parameters</button></div>
          <div class="panel viz"><div class="head"><svg class="s16"><use href="#i-viz"/></svg><span>Test Visualizer</span><button class="hb" aria-label="Restore">❐</button></div></div>
          <div class="panel loc"><div class="head"><svg class="s16"><use href="#g-w3"/></svg><span>Locals</span><button class="hb" aria-label="Help">?</button><svg class="pinico"><use href="#i-pin"/></svg><button class="hb" aria-label="Close">✕</button></div>
            <div class="lbox"><table class="lt"><thead><tr><th>Name</th><th>Value</th><th>Type</th></tr></thead></table></div></div>
          <div class="btabs"><button>Call Stack</button><button class="on">Locals</button><button>Watch List</button><button>Breakpoints</button></div>
        </div>
      </div>
      <div class="lowtabs"><button disabled>Bookmarks</button><button disabled>Search/Replace Results</button><button class="on">To Do</button></div>
      <footer class="status"><span></span><span></span><span class="w"><i>CAPS</i><b>NUM</b><i>SCRL</i></span><span class="n"></span></footer>
    </div>
  </article>

  <div class="rec" aria-label="TestComplete indicator">
    <div class="recbar"><div class="reclogo"><svg width="32" height="32"><use href="#d-tc"/></svg></div><button aria-label="Pause"><svg width="10" height="10" viewBox="0 0 10 10"><path d="M1 1h3v8H1zM6 1h3v8H6z" fill="#555"/></svg></button><button aria-label="Stop"><svg width="10" height="10" viewBox="0 0 10 10"><path d="M1 1h8v8H1z" fill="#555"/></svg></button></div>
    <div class="balloon"><span>Stopping...</span><span>TestProject3</span></div>
  </div>

  <footer class="taskbar">
    <button class="tk orb" aria-label="Start"><svg><use href="#t-orb"/></svg></button><button class="tk" aria-label="Internet Explorer"><svg><use href="#t-ie"/></svg></button><button class="tk" aria-label="Explorer"><svg><use href="#t-exp"/></svg></button><button class="tk on" aria-label="Chrome"><svg viewBox="-4 -4 56 56"><use href="#i-chrome" width="48" height="48"/></svg></button><button class="tk on" aria-label="Outlook"><svg><use href="#t-out"/></svg></button><button class="tk" aria-label="Snipping Tool"><svg><use href="#t-snip"/></svg></button><button class="tk on" aria-label="Task Manager"><svg><use href="#t-tm"/></svg></button><button class="tk on" aria-label="TestComplete"><svg viewBox="-6 -6 60 60"><use href="#d-tc" width="48" height="48"/></svg></button>
    <div class="tray"><svg><use href="#y-cloud"/></svg><svg><use href="#y-v"/></svg><svg><use href="#y-win"/></svg><svg><use href="#y-cpu"/></svg><svg><use href="#y-o"/></svg><svg><use href="#y-ball"/></svg><svg><use href="#y-nv"/></svg><svg><use href="#y-m"/></svg><svg><use href="#y-sync"/></svg><svg><use href="#y-mail"/></svg><svg><use href="#y-plug"/></svg><svg><use href="#y-sig"/></svg><svg><use href="#y-vol"/></svg></div>
    <time class="clock">4:16 PM<br>11/7/2013</time><button class="peek" aria-label="Show desktop"></button>
  </footer>
</section>
</body>
</html>
```
FILE: styles.css
```css
:root { --ui: Roboto, "Liberation Sans", sans-serif; --line: #8a8a94; --barbg: linear-gradient(#fff 0, #f0f3fb 35%, #d3d9ee 36%, #e2e7f6 100%); }
* { box-sizing: border-box; }
body { margin: 0; display: flex; height: 100vh; min-height: 1000px; overflow: hidden; font: 11px/14px var(--ui); color: #000; background: #fff; }
button { font: inherit; color: inherit; margin: 0; padding: 0; border: 0; background: none; display: flex; align-items: center; white-space: nowrap; }
input { font: inherit; margin: 0; padding: 0; }
ul, dl, dd, p, h1 { margin: 0; padding: 0; }
svg { display: block; flex: none; }
a { color: inherit; text-decoration: none; }
.defs { position: absolute; width: 0; height: 0; }
.s16 { width: 16px; height: 16px; }

/* browser on the left monitor */
.browser { flex: 1 1 50%; min-width: 0; position: relative; display: flex; flex-direction: column; font-size: 12px; }
.tabstrip { position: relative; display: flex; height: 25px; background: linear-gradient(90deg, #3f6cb4 0, #1f458c 14%, #3558a0 18%, #20458e 28%, #23488f 38%, #4f77bd 50%, #5c86c8 65%, #6a98d2 80%, #9ab4dc 100%); border-bottom: 1px solid #3a5688; }
.btab { display: flex; align-items: center; gap: 4px; width: 204px; height: 24px; margin-top: 2px; padding: 0 16px; background: #fbfbfb; clip-path: polygon(10px 0, 194px 0, 203px 100%, 0 100%); }
.btab span { flex: 1; }
.newtab { width: 30px; height: 14px; margin-top: 6px; background: #aab8d4; border: 1px solid #6c83b4; border-radius: 3px; transform: skewX(18deg); }
.wbtns { margin-left: auto; display: flex; height: 19px; }
.wb { width: 28px; justify-content: center; border: 1px solid #4a6a98; border-top: 0; background: linear-gradient(#d4def0 0, #a9bedb 50%, #8aa8d0 50%, #aac4e6 100%); }
.wb-close { width: 47px; border-radius: 0 0 4px 0; }
.browser .wbtns { margin-right: 4px; }
.hot { background: linear-gradient(#e89070 0, #d85028 50%, #c02800 50%, #f0a040 100%); box-shadow: 0 0 8px #f08060; }
.cursor { position: absolute; right: 4px; top: 0; }
.chromebar { background: linear-gradient(#fafafa, #e4e4e4 60%, #dcdcdc); border-bottom: 1px solid #a0a0a0; height: 60px; }
.navrow { display: flex; align-items: center; height: 34px; padding: 0 10px 0 8px; }
.navrow > .plain { margin-right: 12px; }
.omni { flex: 1; display: flex; align-items: center; height: 27px; background: #fff; border: 1px solid #aaa; border-radius: 2px; padding: 0 3px 0 6px; gap: 6px; font-size: 15px; }
.omni i { color: #777; font-style: normal; }
.star { margin-left: auto; }
.navrow > .ext { margin: 0 16px 0 10px; }
.navrow > .plain:last-child { margin-right: 0; }
.marks { display: flex; gap: 12px; padding: 3px 7px; }
.marks a { display: flex; align-items: center; gap: 5px; height: 16px; }
.page { flex: 1; padding: 0; font-family: "DejaVu Sans", sans-serif; font-size: 13px; line-height: 14px; }
.pagetop { display: grid; grid-template-columns: 40% auto; justify-content: start; align-items: start; padding-top: 1px; }
.pin { width: 141px; height: 23px; border: 1px solid #b4b4b4; margin: 14px 0 0 9px; }
.tag { background: #0a82ac; color: #fff; font-size: 12px; line-height: 17px; padding: 0 5px; margin-left: 1px; }
.support { margin: 27px 7px 0; }
.page h1 { font-size: 32px; line-height: 40px; margin: 142px 0 0 100px; }
.load { margin: 20px 0 0 100px; }
.logo { margin: 38px auto 0; }
.yellow { position: absolute; right: 0; bottom: 0; width: 30px; height: 10px; background: #ff0; }

/* desktop on the right monitor */
.desktop { flex: 1 1 50%; min-width: 0; position: relative; overflow: hidden; display: flex; flex-direction: column; background: linear-gradient(98deg, transparent 70%, #1f62dd55 71%, transparent 86%) 0 0 no-repeat, radial-gradient(1500px 420px at 100% 0, #3f8df2 0, #1c62e4 40%, #0045c8aa 75%, transparent 100%), linear-gradient(15deg, transparent 40%, #0a50c866 52%, transparent 70%) 0 520px / 500px 300px no-repeat, #0038b4; }
.icons { flex: 1; display: grid; grid-template-columns: repeat(24, 76px) 76px; grid-auto-rows: 98px; font-size: 12px; line-height: 15px; }
.icons a { position: relative; display: flex; flex-direction: column; align-items: center; gap: 4px; padding-top: 6px; text-align: center; color: #fff; text-shadow: 1px 1px 2px #000, 0 1px 2px #000; }
.icons svg { width: 48px; height: 48px; }
.icons .cut { position: absolute; left: 14px; top: 39px; width: 16px; height: 16px; }
.c1 { grid-column: 1; } .c2 { grid-column: 2; } .c4 { grid-column: 4; } .c25 { grid-column: 25; }
.r1 { grid-row: 1; } .r2 { grid-row: 2; } .r3 { grid-row: 3; } .r4 { grid-row: 4; } .r5 { grid-row: 5; } .r6 { grid-row: 6; } .r7 { grid-row: 7; } .r8 { grid-row: 8; } .r9 { grid-row: 9; } .r10 { grid-row: 10; }

.win { position: absolute; display: flex; flex-direction: column; border: 1px solid #14336c; border-radius: 6px; box-shadow: inset 0 0 0 1px #a8c4f0, 2px 2px 8px #0008; }
.tc { left: 280px; right: 201px; top: 2px; bottom: 61px; padding: 0 6px 5px; background: linear-gradient(90deg, #2a52b0 0, #2c5cbc 20%, #3a72d8 40%, #5a9af4 75%, #80b8ff 100%) 0 0 / 100% 32px no-repeat, linear-gradient(#2a52b0, #2456b8 60%, #1c48b0); }
.tc-title { display: flex; align-items: center; gap: 5px; height: 29px; font-size: 12px; }
.tc-title span { text-shadow: 0 0 8px #9cc0f4, 0 0 8px #9cc0f4, 0 0 12px #9cc0f4; }
.tc-title .wbtns { align-self: flex-start; height: 20px; }
.tc-title .wb { background: #ffffff44; border-color: #3a62a8; }
.tc-body { flex: 1; min-height: 0; display: flex; flex-direction: column; background: #fff; border: 1px solid #1c3c78; border-top-color: #fff; }
.menu, .bar { display: flex; align-items: center; background: var(--barbg); border-bottom: 1px solid #aab0c4; }
.menu { height: 25px; font-size: 12px; padding-left: 2px; }
.menu button { margin-left: 12px; }
.menu .grip + button { margin-left: 4px; }
.grip { width: 3px; height: 20px; margin-right: 7px; background: repeating-linear-gradient(#a4a8b8 0 2px, transparent 2px 4px); flex: none; }
.sep { width: 1px; height: 20px; margin: 0 2px; background: #8a8ea0; flex: none; }
.bar svg { width: 16px; height: 16px; }
.drop { width: 12px; height: 18px; display: flex; align-items: flex-end; justify-content: center; flex: none; }
.drop::after, .arrow::after { content: ""; border: 3px solid transparent; border-top-color: #000; border-bottom: 0; }
.arrow { display: inline-flex; margin-left: 6px; }
.arrow.big { width: 14px; margin: 0; justify-content: center; }
.arrow.big::after { border-width: 4px 4px 0; border-top-color: #777; }
.tbar { height: 27px; padding-left: 2px; font-size: 12px; }
.tbar button { width: 24px; height: 24px; justify-content: center; }
.tbar .new { width: 43px; }
.tbar .stop { width: 52px; gap: 6px; }
.tbar .pressed { width: 26px; border: 1px solid #555; border-radius: 3px; background: #c4c8d8; }
.toptabs { display: flex; align-items: flex-end; height: 24px; background: #f0f0f0; border-bottom: 1px solid var(--line); flex: none; }
.toptabs button { height: 18px; padding: 0 3px; background: linear-gradient(#fafafa, #dcdcdc); border: 1px solid var(--line); border-bottom: 0; }
.toptabs .on { height: 21px; margin-bottom: -1px; padding: 0 5px; background: #fff; border-left: 0; border-top-color: #ddd; }
.split { flex: 1; min-height: 0; display: flex; gap: 6px; padding: 2px 3px 1px 2px; border-bottom: 1px solid var(--line); }
.left { width: 218px; display: flex; flex-direction: column; flex: none; }
.right { flex: 1; min-width: 0; display: flex; flex-direction: column; }
.panel { border: 1px solid var(--line); padding: 2px; }
.left .panel { flex: 1; min-height: 0; display: flex; flex-direction: column; }
.head { display: flex; align-items: center; gap: 4px; height: 22px; padding: 0 4px; background: linear-gradient(#bccbdc, #d5e2ef); color: #444c58; flex: none; }
.head.active { background: linear-gradient(#98b2d0, #b6cfea); color: #111; }
.head span { flex: 1; }
.hb { width: 23px; height: 14px; justify-content: center; border: 1px solid #8a9cb4; border-radius: 2px; font-size: 10px; font-weight: bold; color: #445; }
.hb.red { background: #c85048; color: #fff; border-color: #6a2a2a; }
.ws .hb:not(.red) { border-color: #4a6484; color: #fff; text-shadow: 0 0 1px #000, 0 0 1px #000; }
.pinico { width: 12px; height: 14px; margin: 0 5px; }
.ptb { height: 28px; padding-left: 3px; }
.ptb button { width: 24px; justify-content: center; }
.tree { list-style: none; flex: 1; border-top: 1px solid var(--line); margin: 0; }
.tree li, .tt div { display: flex; align-items: center; height: 19px; white-space: nowrap; }
.tree svg, .tt div svg { width: 16px; height: 16px; margin: 0 3px 0 1px; }
.tree { font-size: 11px; }
.bold { font-weight: bold; }
.tree i, .tree b, .tt div i, .tt div b { position: relative; width: 19px; height: 100%; flex: none; --vh: 0; --hw: 0; background: repeating-linear-gradient(#999 0 1px, transparent 1px 2px) 9px 0 / 1px var(--vh) no-repeat, repeating-linear-gradient(90deg, #999 0 1px, transparent 1px 2px) 9px 9px / var(--hw) 1px no-repeat; }
.tree .v, .tt div .v { --vh: 100%; }
.tree .l, .tt div .l { --vh: 50%; }
.tree .t, .tree b, .tt div .t, .tt div b { --hw: 10px; }
.tree b::before, .tt b::before { content: ""; position: absolute; left: 5px; top: calc(50% - 5px); width: 9px; height: 9px; border: 1px solid #8a8a8a; background: linear-gradient(#357, #357) center / 5px 1px no-repeat, linear-gradient(#fff, #ddd); }
.tree b.p::before { background: linear-gradient(#357, #357) center / 5px 1px no-repeat, linear-gradient(#357, #357) center / 1px 5px no-repeat, linear-gradient(#fff, #ddd); }
.tree em { flex: 1; height: 18px; line-height: 16px; margin-right: 1px; background: #f0f0f0; border: 1px dotted #222; font-style: normal; }
.btabs { display: flex; align-items: flex-start; height: 23px; background: #f0f0f0; flex: none; }
.btabs button { height: 18px; padding: 2px 3px 0; background: linear-gradient(#dcdcdc, #f4f4f4); border: 1px solid var(--line); border-top: 0; border-left-width: 0; }
.btabs .on { height: 20px; margin-top: -1px; background: #fff; border-left-width: 1px; padding: 2px 5px 0; }
.right > .btabs button { padding-left: 4px; }
.st { height: 28px; padding-left: 2px; border-right: 1px solid #ccc; }
.st button { height: 20px; padding: 1px 5px 0; gap: 4px; }
.st .on { height: 23px; padding: 2px 6px 0; }
.dtabs { display: flex; align-items: flex-end; gap: 1px; height: 26px; background: #f0f0f0; padding-left: 2px; flex: none; }
.dtabs > button { height: 20px; padding: 0 6px 0 5px; border: 1px solid var(--line); border-bottom: 0; background: linear-gradient(#f4f4f4, #d0d0d0); }
.dtabs > button span { margin: 0 7px 0 5px; }
.dtabs > button i { font: bold 10px/12px "DejaVu Sans", sans-serif; color: #888; }
.dtabs > .on { height: 23px; margin-bottom: -1px; background: #fff; padding: 0 8px 0 6px; }
.scrollers { display: flex; margin: 0 2px 4px auto; }
.scrollers button { width: 16px; height: 16px; justify-content: center; border: 1px solid #aaa; background: #f0f0f0; color: #777; }
.scrollers .blue { color: #3a66b0; }
.scrollers .arrow { margin: 0; }
.doc { flex: 1; min-height: 0; border: 1px solid var(--line); padding: 1px 4px 0 2px; margin-right: 3px; display: flex; }
.docin { flex: 1; min-width: 0; display: flex; gap: 5px; border: 1px solid var(--line); border-bottom: 0; padding: 2px 2px 4px 2px; }
.ops { width: 151px; flex: none; display: flex; flex-direction: column; }
.ops .head { height: 20px; }
.search { display: flex; align-items: center; height: 20px; margin: 3px 0; padding: 0 1px 0 2px; border: 1px solid #e4e4e4; }
.search input { flex: 1; min-width: 0; border: 0; outline: 0; font-style: italic; }
.search button { width: 15px; height: 17px; margin-left: 3px; border: 1px solid #aaa; border-radius: 3px; justify-content: center; }
.search .arrow { margin: 0; }
.acc { flex: 1; min-height: 0; border: 1px solid var(--line); padding: 0 1px 3px; display: flex; flex-direction: column; }
.acc ul { flex: 1; list-style: none; padding-top: 2px; }
.acc li { display: flex; align-items: center; gap: 4px; height: 23px; padding-left: 6px; }
.acc li svg { width: 16px; height: 16px; }
.sect { height: 17px; padding: 3px 0 0 7px; flex: none; background: linear-gradient(#fff 40%, #f1f2f4); border-bottom: 1px solid #ccc; }
.steps { flex: 1; min-width: 0; display: flex; flex-direction: column; }
.sbar { height: 28px; padding-left: 2px; font-size: 12px; color: #808080; flex: none; }
.sbar button { gap: 4px; margin-right: 7px; }
.sbar .sep { margin: 0 6px 0 -2px; }
.sbar .ic { width: 24px; justify-content: center; margin: 0; }
.sbar .ic + .sep { margin: 0 2px; }
.down svg { transform: rotate(180deg); } .lft svg { transform: rotate(-90deg); } .rgt svg { transform: rotate(90deg); }
.tbox { flex: 1; min-height: 0; margin-top: 4px; border: 1px solid var(--line); overflow: hidden; }
.tt, .lt { width: 100%; border-collapse: collapse; table-layout: fixed; }
.cg { width: 24px; } .ci { width: 248px; }
th { height: 18px; padding: 0 2px; text-align: left; font-weight: normal; background: linear-gradient(#fff 45%, #f1f2f4 46%); border-bottom: 1px solid #d0d0d0; border-right: 1px solid #e4e4e4; }
td { height: 19px; padding: 0 0 0 2px; white-space: nowrap; overflow: hidden; text-overflow: ellipsis; }
.tt td:nth-child(2) { padding: 0; }
.tt td:first-child { position: relative; background: #f0f0f0; border-right: 1px solid var(--line); border-bottom: 1px solid #aaa; padding: 0; }
.sh td, .tt .sh div { height: 17px; }
.shot { width: 14px; height: 15px; margin-left: auto; margin-right: 4px; }
.cur { position: absolute; left: 0; top: 1px; }
.sel td:nth-child(n+3) { background: #3399ff; color: #fff; border-top: 1px dotted #c87820; border-bottom: 1px dotted #c87820; }
.sel td:nth-child(n+3) { height: 19px; line-height: 13px; }
.tt em { flex: 1; height: 19px; line-height: 17px; background: #00f; color: #fff; border: 1px dotted #ee0; border-right: 0; font-style: normal; }
.viz { margin: 0 5px 6px 0; border-top: 0; padding: 0 2px 1px; }
.viz .head, .loc .head { padding: 0 5px; }
.loc { height: 162px; margin-right: 5px; display: flex; flex-direction: column; flex: none; }
.lbox { flex: 1; border: 1px solid var(--line); margin-bottom: 1px; }
.lt th { height: 19px; }
.lt th:nth-child(1) { width: 33%; } .lt th:nth-child(2) { width: 46%; }
.lowtabs { display: flex; align-items: flex-end; height: 24px; padding-left: 0; border-bottom: 1px solid var(--line); flex: none; }
.lowtabs button { height: 18px; padding: 1px 6px 0; border: 1px solid var(--line); border-bottom: 0; background: linear-gradient(#f0f0f0, #dcdcdc); color: #9a9a9a; }
.lowtabs .on { color: #000; background: #f6f6f6; }
.status { display: flex; height: 19px; background: #f0eceb; flex: none; }
.status span { width: 53px; border-right: 1px solid #ccc; display: flex; align-items: center; gap: 8px; padding-top: 1px; }
.status .w { width: 98px; padding-left: 4px; } .status .n { width: 34px; }
.status i { font-style: normal; color: #a4a4a4; } .status b { font-weight: normal; }

/* task manager, running off the right edge of the monitor */
.tm { left: 1690px; width: 420px; top: 563px; bottom: 61px; padding: 0 7px 6px; background: linear-gradient(90deg, #7a9cd8 0, #6a90d0 30%, #2c5cb8 50%, #1c4cb0 100%); }
.tm-title { height: 28px; padding: 0 22px; font-size: 12px; line-height: 27px; }
.tm-body { flex: 1; min-height: 0; display: flex; flex-direction: column; background: #fff; border-top: 1px solid #1c3c78; }
.tm-menu { display: flex; height: 20px; background: var(--barbg); color: #808080; font-size: 12px; padding-left: 8px; gap: 14px; }
.tm-tabs { display: flex; align-items: flex-end; height: 27px; padding-left: 7px; background: #f0f0f0; border-bottom: 1px solid var(--line); }
.tm-tabs button { height: 18px; padding: 0 4px; border: 1px solid var(--line); border-left-width: 0; border-bottom: 0; background: linear-gradient(#f8f8f8, #d8d8d8); }
.tm-tabs .on { height: 21px; margin-bottom: -1px; background: #fff; }
.tm-page { flex: 1; padding: 8px 12px 0; border-bottom: 1px solid var(--line); }
fieldset { margin: 0; min-width: 0; padding: 0 9px 7px; border: 1px solid #d5dfe8; border-radius: 3px; }
legend { padding: 0 2px; margin-left: 7px; line-height: 14px; }
.wide legend { margin-left: -3px; }
.tm-grid { display: grid; grid-template-columns: 99px 240px; gap: 6px 17px; }
.tm-grid fieldset { height: 86px; padding-left: 8px; }
.g1 { margin-left: 10px; margin-top: 3px; }
.g1 text { fill: #0f0; font-size: 11px; text-anchor: middle; }
.hist { display: flex; gap: 6px; margin-top: 3px; }
.tm-low { display: flex; gap: 14px; margin-top: 9px; }
.tm-c { width: 179px; }
.tm-c fieldset { height: 76px; margin-bottom: 10px; padding: 2px 9px 0 17px; }
.tm-c .kern { height: 47px; }
.tm-c legend { margin-left: -2px; }
.tm-c .sys { height: 94px; padding-left: 7px; }
dl { display: grid; grid-template-columns: 1fr auto; line-height: 15px; }
.tm-c .sys dl { grid-template-columns: 1fr; line-height: 14px; }
.resmon { width: 140px; height: 21px; border: 1px solid #777; border-radius: 3px; background: linear-gradient(#f4f4f4, #d4d4d4); }
.tm-status { display: flex; align-items: center; height: 28px; background: #f0eceb; border-top: 6px solid #f0f0f0; }
.tm-status span { width: 104px; padding-left: 4px; }

/* recording indicator */
.rec { position: absolute; right: 18px; top: 24px; width: 103px; }
.recbar { display: flex; align-items: center; gap: 3px; height: 41px; border: 1px solid #e8e8ec; border-radius: 4px; background: linear-gradient(#dcecff, #88b4f4 60%, #5a94ec); box-shadow: 0 0 0 1px #8a98b0; }
.reclogo { width: 42px; height: 100%; margin-right: 2px; display: flex; align-items: center; justify-content: center; background: linear-gradient(#e4e4e8, #b4b4b4); }
.recbar button { width: 23px; height: 22px; justify-content: center; border: 1px solid #888; border-radius: 4px; background: linear-gradient(#e4e0dc, #b0aaa4); }
.balloon { display: grid; width: 80px; height: 43px; margin: 3px 0 0 auto; padding: 2px 6px 5px; border: 1px solid #889; border-radius: 3px; background: linear-gradient(#fff, #e4e4f0); text-align: right; line-height: 17px; }
.balloon span + span { border-top: 1px solid #000; }

/* taskbar */
.taskbar { position: relative; display: flex; align-items: center; height: 40px; padding-left: 0; background: linear-gradient(#ffffff30, #ffffff08 10%, transparent), linear-gradient(90deg, #1a3c84, #1f4088 30%, #24458c 62%, #2c529c 74%, #1a3666 76%, #1b386c 100%); border-top: 1px solid #0c2450; color: #fff; }
.tk { width: 58px; height: 38px; margin-right: 4px; justify-content: center; border: 1px solid transparent; border-radius: 3px; }
.tk.orb { width: 54px; margin-right: 6px; }
.tk.on { border-color: #a4b4d4; background: linear-gradient(135deg, #a8b8d8, #5470a8 60%, #4a68a4); }
.tk svg { width: 38px; height: 36px; }
.tray { margin-left: auto; display: flex; gap: 6px; }
.tray svg { width: 18px; height: 18px; }
.clock { width: 76px; text-align: center; font-size: 12px; line-height: 17px; }
.peek { width: 15px; height: 39px; border: 1px solid #7f94bc; background: linear-gradient(135deg, #6a84b8, #1c3870); }
```
